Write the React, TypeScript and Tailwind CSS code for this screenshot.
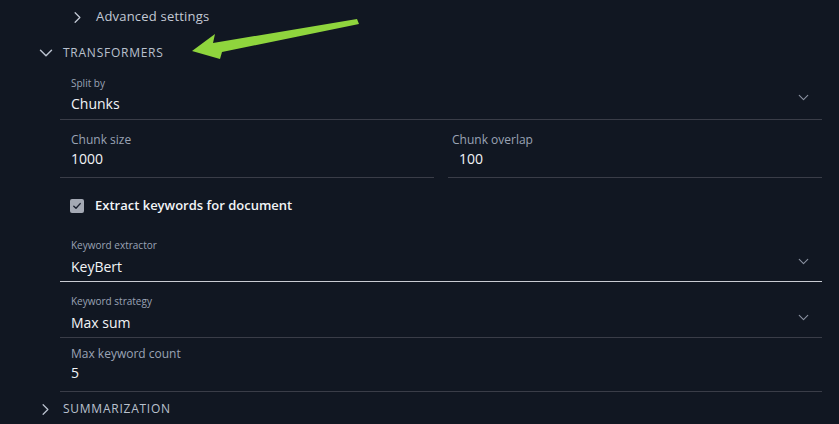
import React from "react";
import { ChevronDown, ChevronRight } from "lucide-react";

const font = { fontFamily: '"Open Sans", "Noto Sans", sans-serif' };

function SelectChevron() {
  return (
    <ChevronDown size={17} strokeWidth={1.6} className="text-[#8a91a0] mr-[10px]" />
  );
}

export default function App() {
  return (
    <div className="relative w-full h-[424px] bg-[#111722] overflow-hidden" style={font}>
      {/* Advanced settings */}
      <div className="h-[34px] flex items-center pl-[68px] text-[#c3c9d5]">
        <ChevronRight size={19} strokeWidth={1.6} className="text-[#c3c9d5]" />
        <span className="ml-[9px] text-[13px] font-medium tracking-[0.2px]">Advanced settings</span>
      </div>

      {/* Transformers */}
      <div className="h-[38px] flex items-center pl-[35px] text-[#b9c1ce]">
        <ChevronDown size={22} strokeWidth={1.6} />
        <span className="ml-[6px] text-[12px] font-medium tracking-[0.75px] uppercase">Transformers</span>
      </div>

      <div className="ml-[60px] mr-[17px]">
        {/* Split by */}
        <div className="pt-[5px] pb-[5px] border-b border-[#3a3d48] flex items-end">
          <div className="flex-1 pl-[11px] flex flex-col">
            <span className="text-[10px] leading-[12px] text-[#9aa3b5]">Split by</span>
            <span className="mt-[5px] text-[14px] leading-[20px] text-[#f2f4f7]">Chunks</span>
          </div>
          <div className="mb-[8px]"><SelectChevron /></div>
        </div>

        {/* Chunk size / overlap */}
        <div className="grid grid-cols-2 gap-[14px]">
          <div className="pt-[12px] pb-[8px] border-b border-[#3a3d48] pl-[11px] flex flex-col">
            <span className="text-[12px] leading-[16px] text-[#9aa3b5]">Chunk size</span>
            <span className="mt-[1px] text-[14px] leading-[20px] text-[#f2f4f7]">1000</span>
          </div>
          <div className="pt-[12px] pb-[8px] border-b border-[#3a3d48] pl-[4px] flex flex-col">
            <span className="text-[12px] leading-[16px] text-[#9aa3b5]">Chunk overlap</span>
            <span className="mt-[1px] pl-[7px] text-[14px] leading-[20px] text-[#f2f4f7]">100</span>
          </div>
        </div>

        {/* Checkbox */}
        <div className="h-[56px] flex items-center pl-[10px]">
          <div className="w-[14px] h-[14px] rounded-[2px] bg-[#a4a9b4] flex items-center justify-center">
            <svg width="10" height="10" viewBox="0 0 10 10" fill="none">
              <path d="M1.8 5.2 L4 7.3 L8.2 2.6" stroke="#1b2130" strokeWidth="1.4" strokeLinecap="round" strokeLinejoin="round" />
            </svg>
          </div>
          <span className="ml-[11px] text-[13px] font-semibold text-[#f2f4f7]">Extract keywords for document</span>
        </div>

        {/* Keyword extractor */}
        <div className="pt-[5px] pb-[4px] border-b border-[#c9ccd3] flex items-end">
          <div className="flex-1 pl-[11px] flex flex-col">
            <span className="text-[10px] leading-[12px] text-[#9aa3b5]">Keyword extractor</span>
            <span className="mt-[6px] text-[14px] leading-[20px] text-[#f2f4f7]">KeyBert</span>
          </div>
          <div className="mb-[7px]"><SelectChevron /></div>
        </div>

        {/* Keyword strategy */}
        <div className="pt-[13px] pb-[4px] border-b border-[#3a3d48] flex items-end">
          <div className="flex-1 pl-[11px] flex flex-col">
            <span className="text-[10px] leading-[12px] text-[#9aa3b5]">Keyword strategy</span>
            <span className="mt-[6px] text-[14px] leading-[20px] text-[#f2f4f7]">Max sum</span>
          </div>
          <div className="mb-[7px]"><SelectChevron /></div>
        </div>

        {/* Max keyword count */}
        <div className="pt-[8px] pb-[8px] border-b border-[#3a3d48] pl-[11px] flex flex-col">
          <span className="text-[12px] leading-[16px] text-[#9aa3b5]">Max keyword count</span>
          <span className="mt-[1px] text-[14px] leading-[20px] text-[#f2f4f7]">5</span>
        </div>
      </div>

      {/* Summarization */}
      <div className="h-[34px] flex items-center pl-[36px] text-[#b9c1ce]">
        <ChevronRight size={19} strokeWidth={1.6} />
        <span className="ml-[8px] text-[12px] font-medium tracking-[0.75px] uppercase">Summarization</span>
      </div>

      {/* Annotation arrow */}
      <svg className="absolute left-0 top-0 pointer-events-none" width="839" height="424">
        <polygon
          points="357,19 359,24 222,52 220,59 192,51 215,34 213,43"
          fill="#8fd53d"
        />
      </svg>
    </div>
  );
}
